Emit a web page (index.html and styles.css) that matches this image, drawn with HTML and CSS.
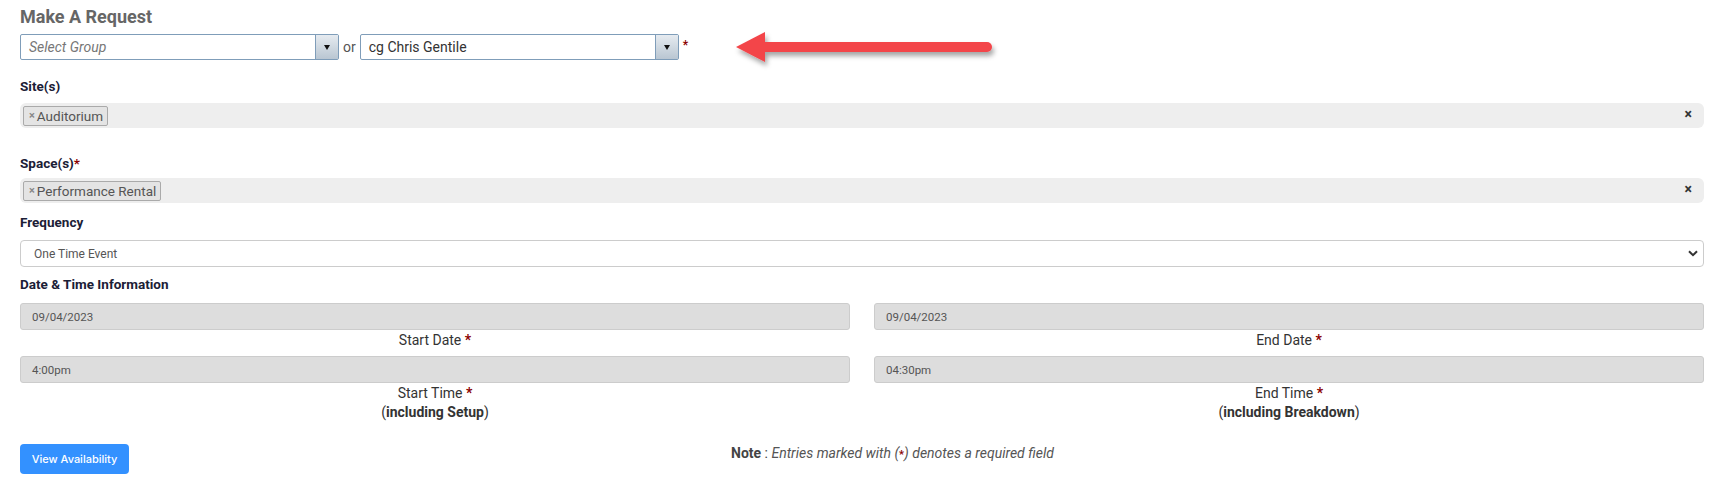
FILE: index.html
```html
<!DOCTYPE html>
<html>
<head>
<meta charset="utf-8">
<link rel="stylesheet" href="styles.css">
</head>
<body>
<div class="page">
  <h2 class="title">Make A Request</h2>
  <div class="who-row">
    <div class="chosen">
      <span class="chosen-text placeholder">Select Group</span>
      <span class="chosen-btn"><span class="tri"></span></span>
    </div>
    <span class="or">or</span>
    <div class="chosen">
      <span class="chosen-text">cg Chris Gentile</span>
      <span class="chosen-btn"><span class="tri"></span></span>
    </div>
    <span class="req">*</span>
    <svg class="arrow" width="290" height="46" viewBox="0 0 290 46">
      <defs>
        <filter id="sh" x="-10%" y="-40%" width="120%" height="190%">
          <feDropShadow dx="2" dy="4" stdDeviation="2.5" flood-color="#000" flood-opacity="0.35"/>
        </filter>
      </defs>
      <g filter="url(#sh)">
        <polygon points="6,20 35,5 35,35" fill="#f34449"/>
        <path d="M33 15 H257 a5 5 0 0 1 0 10 H33 Z" fill="#f34449"/>
      </g>
    </svg>
  </div>

  <div class="label first">Site(s)</div>
  <div class="multi site">
    <span class="tag"><span class="tag-x">×</span>Auditorium</span>
    <span class="clear">×</span>
  </div>

  <div class="label space">Space(s)<span class="req-s">*</span></div>
  <div class="multi spc">
    <span class="tag"><span class="tag-x">×</span>Performance Rental</span>
    <span class="clear">×</span>
  </div>

  <div class="label freq">Frequency</div>
  <div class="select">
    <span>One Time Event</span>
    <svg class="chev" width="10" height="7" viewBox="0 0 10 7"><path d="M1 1.2 L5 5.2 L9 1.2" fill="none" stroke="#333" stroke-width="2"/></svg>
  </div>

  <div class="label dt">Date &amp; Time Information</div>
  <div class="grid">
    <div class="cell">
      <div class="input">09/04/2023</div>
      <div class="cap">Start Date <span class="req-c">*</span></div>
    </div>
    <div class="cell">
      <div class="input">09/04/2023</div>
      <div class="cap">End Date <span class="req-c">*</span></div>
    </div>
    <div class="cell">
      <div class="input">4:00pm</div>
      <div class="cap">Start Time <span class="req-c">*</span></div>
      <div class="cap2">(<b>including Setup</b>)</div>
    </div>
    <div class="cell">
      <div class="input">04:30pm</div>
      <div class="cap">End Time <span class="req-c">*</span></div>
      <div class="cap2">(<b>including Breakdown</b>)</div>
    </div>
  </div>

  <div class="bottom">
    <button class="btn">View Availability</button>
    <div class="note"><b>Note</b> : <i>Entries marked with (<span class="req-n">*</span>) denotes a required field</i></div>
  </div>
</div>
</body>
</html>
```
FILE: styles.css
```css
html, body {
  margin: 0;
  padding: 0;
  background: #fff;
}
body {
  font-family: Roboto, "Liberation Sans", Arial, sans-serif;
  color: #333;
}
.page {
  padding: 6px 24px 0 20px;
}
.title {
  margin: 0;
  font-size: 18px;
  font-weight: 700;
  color: #666;
  line-height: 21px;
}
.who-row {
  display: flex;
  align-items: center;
  margin-top: 7px;
  height: 26px;
  position: relative;
}
.chosen {
  width: 319px;
  height: 26px;
  box-sizing: border-box;
  border: 1px solid #7f9db9;
  border-radius: 2px;
  display: flex;
  align-items: stretch;
  background: #fff;
}
.chosen-text {
  flex: 1;
  font-size: 14px;
  line-height: 24px;
  padding-left: 8px;
  color: #333;
}
.chosen-text.placeholder {
  font-style: italic;
  color: #777;
}
.chosen-btn {
  width: 22px;
  border-left: 1px solid #7f9db9;
  background: linear-gradient(#e6ebf0, #b9c6d2);
  display: flex;
  align-items: center;
  justify-content: center;
}
.tri {
  width: 0;
  height: 0;
  border-left: 3.5px solid transparent;
  border-right: 3.5px solid transparent;
  border-top: 5px solid #111;
}
.or {
  font-size: 14px;
  color: #555;
  margin: 0 4px 0 4px;
}
.req {
  color: #8b0000;
  font-size: 12px;
  font-weight: 700;
  margin-left: 4px;
  align-self: flex-start;
  margin-top: 4px;
}
.arrow {
  position: absolute;
  left: 710px;
  top: -7px;
}
.label {
  font-size: 13.5px;
  font-weight: 700;
  color: #1b2036;
  line-height: 16px;
}
.label.first { margin-top: 18px; }
.label.space { margin-top: 27px; }
.label.freq { margin-top: 11px; }
.label.dt { margin-top: 9px; }
.req-s {
  color: #8b0000;
}
.multi {
  height: 25px;
  background: #eee;
  border-radius: 6px;
  display: flex;
  align-items: center;
  padding: 0 0 0 3px;
  position: relative;
}
.multi.site { margin-top: 9px; }
.multi.spc { margin-top: 7px; }
.tag {
  display: inline-flex;
  align-items: center;
  height: 20px;
  box-sizing: border-box;
  border: 1px solid #aaa;
  border-radius: 2px;
  background: #e4e4e4;
  font-size: 13.5px;
  color: #555;
  padding: 0 4px 0 5px;
}
.tag-x {
  font-size: 11px;
  color: #888;
  margin-right: 2px;
  font-weight: 700;
}
.clear {
  position: absolute;
  right: 12px;
  top: 3px;
  font-size: 14px;
  font-weight: 700;
  color: #333;
}
.select {
  margin-top: 10px;
  height: 27px;
  box-sizing: border-box;
  border: 1px solid #ccc;
  border-radius: 4px;
  display: flex;
  align-items: center;
  justify-content: space-between;
  padding: 0 5px 0 13px;
  font-size: 12px;
  color: #555;
}
.grid {
  margin-top: 11px;
  display: grid;
  grid-template-columns: 1fr 1fr;
  column-gap: 24px;
}
.cell {
  display: flex;
  flex-direction: column;
  align-items: stretch;
  margin-bottom: 7px;
}
.input {
  height: 27px;
  box-sizing: border-box;
  background: #ddd;
  border: 1px solid #ccc;
  border-radius: 3px;
  font-size: 11.5px;
  color: #555;
  padding-left: 11px;
  display: flex;
  align-items: center;
}
.cap {
  text-align: center;
  font-size: 14px;
  color: #333;
  line-height: 18px;
  margin-top: 1px;
}
.req-c {
  color: #8b0000;
  font-weight: 700;
}
.cap2 {
  text-align: center;
  font-size: 14px;
  color: #333;
  line-height: 18px;
  margin-top: 1px;
}
.bottom {
  margin-top: 16px;
  display: flex;
  align-items: center;
}
.btn {
  font-family: Inter, Roboto, sans-serif;
  background: #3391ff;
  color: #fff;
  border: none;
  border-radius: 4px;
  height: 30px;
  width: 109px;
  font-size: 11px;
  font-weight: 500;
  padding: 0;
}
.note {
  margin-left: 602px;
  margin-top: -12px;
  font-size: 14px;
  color: #444;
}
.note i { color: #555; }
.req-n {
  color: #8b0000;
  font-style: normal;
  font-weight: 700;
  font-size: 11px;
}
```
